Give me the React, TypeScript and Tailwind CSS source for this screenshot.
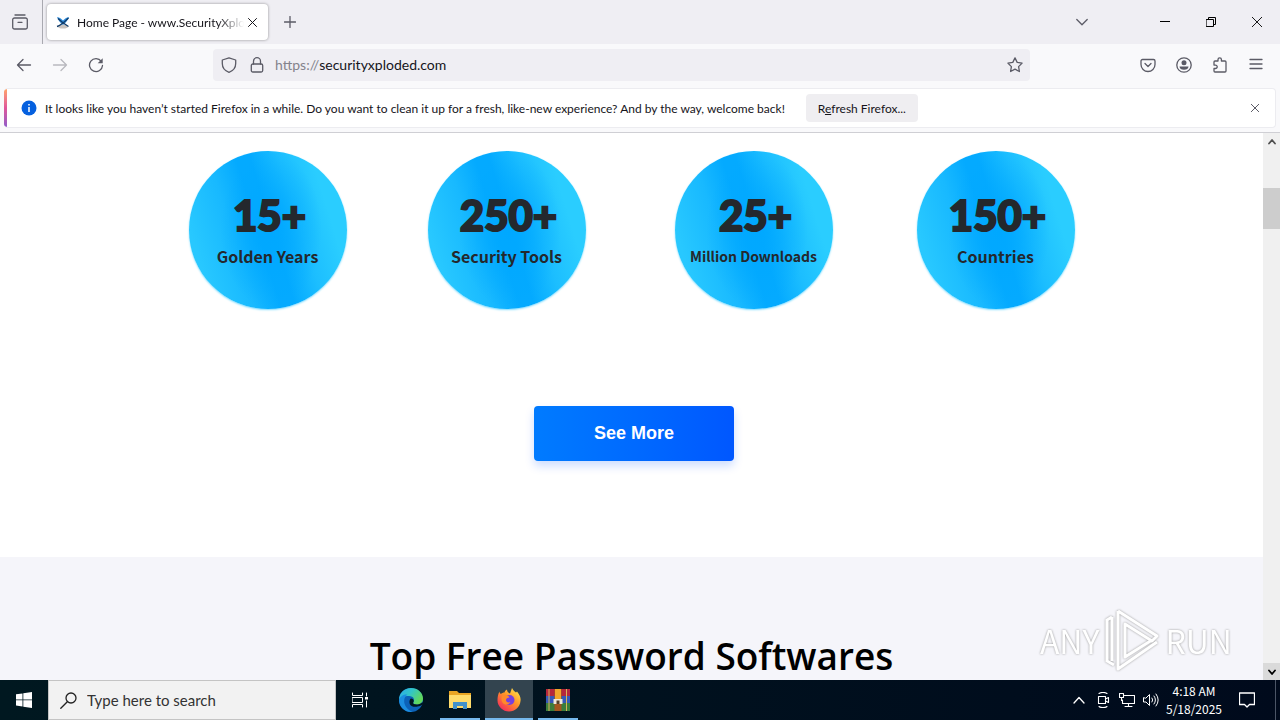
import type { ReactNode } from 'react'
import clsx from 'clsx'

type IconProps = {
  className?: string
  children: ReactNode
  box?: number
}

const Icon = ({ className, children, box = 16 }: IconProps) => (
  <svg
    viewBox={`0 0 ${box} ${box}`}
    className={clsx('shrink-0', className ?? 'h-4 w-4')}
    fill="none"
    stroke="currentColor"
    strokeWidth="1.3"
    strokeLinecap="round"
    strokeLinejoin="round"
    aria-hidden="true"
  >
    {children}
  </svg>
)

const iconButton = 'flex h-8 w-9 items-center justify-center text-[#5b5b66]'

const TabBar = () => (
  <header className="flex h-11 shrink-0 items-center bg-[#efeef3]">
    <button
      aria-label="Firefox View"
      className="flex h-11 w-[43px] items-center justify-center border-r border-[#a9a9b0] pr-[3px] text-[#5b5b66]"
    >
      <Icon className="h-4 w-4">
        <path d="M3 1h10" />
        <path d="M2.500 4h11a1.800 1.800 0 0 1 1.800 1.800v7.400a1.800 1.800 0 0 1-1.800 1.800h-11A1.800 1.800 0 0 1 .7 13.200V5.800A1.800 1.800 0 0 1 2.500 4zM6 8.300h4" />
      </Icon>
    </button>
    <div className="ml-1 flex h-9 w-[221px] items-center rounded bg-white pl-2 shadow-[0_0_3px_rgba(0,0,0,0.4)]">
      <svg viewBox="0 0 16 16" className="h-4 w-4 shrink-0" aria-hidden="true">
        <ellipse cx="8" cy="12.500" rx="5" ry="2" fill="#c9c4c0" />
        <path d="M2 3c3 .5 4 1.500 6 3.500C10 4.500 11 3.500 14 3c-1 3-2.500 5-6 8C4.500 8 3 6 2 3z" fill="#2f8fe0" />
        <path d="M2 12.500c4-1 7-4 11.500-8.500M3 4.500c3 3 6 5.500 10.500 8" stroke="#123c69" strokeWidth="1.300" fill="none" />
      </svg>
      <span className="ml-[6px] w-[167px] overflow-hidden pt-[2px] text-xs whitespace-nowrap text-[#15141a] [mask-image:linear-gradient(to_right,black_84%,transparent)]">
        Home Page - www.SecurityXploded.com
      </span>
      <button aria-label="Close tab" className="flex h-6 w-4 items-center justify-center text-[#15141a]">
        <Icon className="h-[9px] w-[9px]" box={9}>
          <path d="M.5.5l8 8M8.500.5l-8 8" strokeWidth="1" />
        </Icon>
      </button>
    </div>
    <button aria-label="New tab" className="ml-1 flex h-8 w-9 items-center justify-center text-[#5b5b66]">
      <Icon className="h-3 w-3" box={12}>
        <path d="M6 .5v11M.5 6h11" />
      </Icon>
    </button>
    <button aria-label="List all tabs" className="mr-[42px] ml-auto flex h-8 w-9 items-center justify-center text-[#5b5b66]">
      <Icon className="h-3 w-3" box={12}>
        <path d="M.8 3.500L6 8.700l5.200-5.200" />
      </Icon>
    </button>
    <div className="flex text-black">
      <button aria-label="Minimize" className="flex h-11 w-[46px] items-center justify-center">
        <Icon className="h-[10px] w-[10px]" box={10}>
          <path d="M0 4.500h10" strokeWidth="1" />
        </Icon>
      </button>
      <button aria-label="Restore" className="flex h-11 w-[46px] items-center justify-center">
        <Icon className="h-[10px] w-[10px]" box={10}>
          <path d="M.5 2.500h7v7h-7zM2.500 2V.5h7v7H8" strokeWidth="1" />
        </Icon>
      </button>
      <button aria-label="Close" className="flex h-11 w-[46px] items-center justify-center">
        <Icon className="h-[10px] w-[10px]" box={10}>
          <path d="M0 0l10 10M10 0L0 10" strokeWidth="0.900" />
        </Icon>
      </button>
    </div>
  </header>
)

const NavBar = () => (
  <nav className="flex h-11 shrink-0 items-center bg-[#f9f9fb] px-1.5 pb-[2px]">
    <button aria-label="Back" className={iconButton}>
      <Icon>
        <path d="M14.500 8h-13M7 2.500L1.500 8 7 13.500" />
      </Icon>
    </button>
    <button aria-label="Forward" className={clsx(iconButton, 'opacity-40')}>
      <Icon>
        <path d="M1.500 8h13M9 2.500L14.500 8 9 13.500" />
      </Icon>
    </button>
    <button aria-label="Reload" className={iconButton}>
      <Icon>
        <path d="M13.300 4.300A6.500 6.500 0 1 0 14.500 8.500" />
        <path d="M14.700 1.200v5h-5z" fill="currentColor" stroke="none" />
      </Icon>
    </button>
    <div className="ml-[99px] flex h-8 flex-1 items-center rounded-sm bg-[#efeef3] pl-2 text-[#5b5b66]">
      <Icon>
        <path d="M8 .8L1.300 3v3.500c0 4 2.300 7.200 6.700 8.800 4.400-1.600 6.700-4.800 6.700-8.800V3z" />
      </Icon>
      <Icon className="ml-3 h-4 w-4">
        <path d="M4.500 7V4.200a3.500 3.500 0 0 1 7 0V7" />
        <rect x="2.300" y="7" width="11.400" height="8" rx="1.500" />
      </Icon>
      <label htmlFor="address" className="ml-[10px] text-sm text-[#84838c]">
        https://
      </label>
      <input
        id="address"
        defaultValue="securityxploded.com"
        className="min-w-0 flex-1 bg-transparent text-sm text-[#15141a] outline-none"
      />
      <button aria-label="Bookmark this page" className="flex h-8 w-[30px] items-center justify-center">
        <Icon>
          <path d="M8 .9l2.200 4.500 4.900.7-3.500 3.500.8 4.900L8 12.200l-4.400 2.300.8-4.900L.9 6.100l4.900-.7z" />
        </Icon>
      </button>
    </div>
    <div className="ml-[100px] flex">
      <button aria-label="Save to Pocket" className={iconButton}>
        <Icon>
          <path d="M2.500 2.500h11A1.500 1.500 0 0 1 15 4v3.500a7 7 0 0 1-14 0V4a1.500 1.500 0 0 1 1.500-1.500z" />
          <path d="M5 6.500l3 3 3-3" />
        </Icon>
      </button>
      <button aria-label="Account" className={iconButton}>
        <Icon>
          <circle cx="8" cy="8" r="7.200" />
          <circle cx="8" cy="5.800" r="2.500" fill="currentColor" stroke="none" />
          <path d="M3.500 9.500h9c0 2-1.800 3.300-4.500 3.300s-4.500-1.300-4.500-3.300z" fill="currentColor" stroke="none" />
        </Icon>
      </button>
      <button aria-label="Extensions" className={iconButton}>
        <Icon>
          <path d="M6 4V2.500a1.700 1.700 0 0 1 3.400 0V4H13a1 1 0 0 1 1 1v9a1 1 0 0 1-1 1H3a1 1 0 0 1-1-1v-2.500h1.500a1.700 1.700 0 0 0 0-3.400H2V5a1 1 0 0 1 1-1z" />
        </Icon>
      </button>
      <button aria-label="Open application menu" className={iconButton}>
        <Icon>
          <path d="M2 2.500h12M2 7h12M2 11.500h12" />
        </Icon>
      </button>
    </div>
  </nav>
)

const Notification = () => (
  <div className="flex h-[45px] shrink-0 border-b border-[#cfcfd4] bg-[#f9f9fb] px-1 pb-1">
    <div className="flex flex-1 items-center overflow-hidden rounded border border-l-0 border-[#ececf0] bg-white">
      <span className="h-full w-[3px] bg-linear-to-b from-[#ffa266] via-[#e0559a] to-[#9059c8]" />
      <svg viewBox="0 0 16 16" className="ml-[14px] h-4 w-4 shrink-0" aria-hidden="true">
        <circle cx="8" cy="8" r="7.500" fill="#0560df" />
        <path d="M8 7v5M8 4v1.500" stroke="white" strokeWidth="1.500" />
      </svg>
      <p className="ml-2 pt-[2px] text-xs whitespace-nowrap text-[#15141a]">
        It looks like you haven’t started Firefox in a while. Do you want to clean it up for a fresh, like-new
        experience? And by the way, welcome back!
      </p>
      <button className="ml-[21px] h-7 w-28 rounded bg-[#efeef1] pt-[2px] text-xs whitespace-nowrap text-[#15141a]">
        R<u>e</u>fresh Firefox...
      </button>
      <button aria-label="Dismiss" className="mr-1 ml-auto flex h-8 w-8 items-center justify-center text-[#5b5b66]">
        <Icon className="h-2 w-2" box={8}>
          <path d="M.3.3l7.400 7.400M7.700.3L.3 7.700" strokeWidth="1" />
        </Icon>
      </button>
    </div>
  </div>
)

const stats = [
  { value: '15+', label: 'Golden Years', gap: '', size: 'text-base' },
  { value: '250+', label: 'Security Tools', gap: 'ml-[81px]', size: 'text-base' },
  { value: '25+', label: 'Million Downloads', gap: 'ml-[89px]', size: 'text-sm' },
  { value: '150+', label: 'Countries', gap: 'ml-[84px]', size: 'text-base' },
]

const Watermark = () => (
  <div className="absolute right-[31px] bottom-2 flex items-center gap-1 font-['Noto_Sans_CJK_SC',sans-serif] text-[32px] leading-none text-white [filter:drop-shadow(0_0_1px_#999)]">
    <span>ANY</span>
    <svg viewBox="0 0 58 64" className="h-16 w-[58px]" fill="none" stroke="currentColor" strokeWidth="3" aria-hidden="true">
      <path d="M15 3v58l39-27M15 3l39 25-5 5-27-17v33l27-17" strokeLinejoin="round" />
      <path d="M9 9l-5 3v41l7 4M9 9v44" />
    </svg>
    <span>RUN</span>
  </div>
)

const ScrollBar = () => (
  <div className="flex w-[17px] shrink-0 flex-col bg-[#f0f0f0]">
    <button aria-label="Scroll up" className="flex h-[17px] items-center justify-center text-[#505050]">
      <Icon className="h-2 w-2" box={8}>
        <path d="M1 5.500L4 2l3 3.500" strokeWidth="1.800" />
      </Icon>
    </button>
    <div className="flex-1 pt-[38px]">
      <div className="h-[41px] bg-[#cdcdcd]" />
    </div>
    <button aria-label="Scroll down" className="flex h-[17px] items-center justify-center bg-[#dadada] text-black">
      <Icon className="h-2 w-2" box={8}>
        <path d="M1 2.500L4 6l3-3.500" strokeWidth="1.800" />
      </Icon>
    </button>
  </div>
)

const Page = () => (
  <main className="relative flex min-h-0 flex-1 overflow-hidden bg-white">
    <div className="relative flex min-w-0 flex-1 flex-col">
      <section className="shrink-0 pt-[18px] pb-24">
        <div className="flex justify-center">
          {stats.map(({ value, label, gap, size }) => (
            <div
              key={label}
              className={clsx(
                'flex h-[158px] w-[158px] shrink-0 flex-col items-center rounded-full bg-[radial-gradient(ellipse_32%_50%_at_52%_50%,#00a8ff,#00a8ff00),linear-gradient(73deg,#28c8ff_12%,#18b9ff_32%,#04aaff_45%,#04aaff_52%,#1cbeff_66%,#2acdff_82%)] pt-10 text-[#24282d] shadow-[0_1px_2px_#7fdcff]',
                gap,
              )}
            >
              <strong className="pl-1 font-[Lato,sans-serif] text-[42px] leading-[48px] font-black [-webkit-text-stroke:2px_#24282d]">
                {value}
              </strong>
              <span
                className={clsx(
                  "mt-[5px] font-['Noto_Sans_CJK_SC',sans-serif] leading-6 font-bold whitespace-nowrap",
                  size,
                )}
              >
                {label}
              </span>
            </div>
          ))}
        </div>
        <div className="mt-[97px] flex justify-center pl-[5px]">
          <button className="h-[55px] w-[200px] rounded bg-linear-to-r from-[#007bff] to-[#0057ff] pb-[2px] font-['Liberation_Sans',sans-serif] text-lg font-bold text-white shadow-[0_5px_10px_rgba(0,87,255,0.2)]">
            See More
          </button>
        </div>
      </section>
      <section className="flex-1 bg-[#f5f5fa] pt-[70px]">
        <h2 className="text-center font-['Open_Sans',sans-serif] text-[37px] leading-[58px] font-semibold whitespace-nowrap text-black">
          Top Free Password Softwares
        </h2>
      </section>
      <Watermark />
    </div>
    <ScrollBar />
  </main>
)

const taskButton = 'flex h-10 w-12 items-center justify-center'

const TaskBar = () => (
  <footer className="flex h-10 shrink-0 items-center bg-linear-to-r from-[#001820] to-[#000a1c] text-white">
    <button aria-label="Start" className={taskButton}>
      <svg viewBox="0 0 16 16" className="h-4 w-4" fill="white" aria-hidden="true">
        <path d="M0 2.300l6.500-.9v6.100H0zM7.300 1.300L16 0v7.500H7.300zM0 8.300h6.500v6.200L0 13.600zM7.300 8.300H16V16l-8.700-1.300z" />
      </svg>
    </button>
    <label className="flex h-10 w-[288px] items-center border border-[#c4c4c4] bg-[#f2f2f2] pl-[11px] text-[#222]">
      <Icon className="h-[17px] w-[17px]" box={17}>
        <circle cx="11" cy="6" r="5" />
        <path d="M7.300 9.700L.8 16.200" />
      </Icon>
      <input
        aria-label="Search"
        placeholder="Type here to search"
        className="ml-[10px] min-w-0 flex-1 bg-transparent text-[15px] outline-none placeholder:text-[#333]"
      />
    </label>
    <button aria-label="Task View" className={taskButton}>
      <Icon className="h-4 w-4">
        <path d="M.5 1v2.500h10V1M.5 15v-2.500h10V15M.5 5.500h10v5H.5zM14.500 1v3M14.500 9v6" strokeWidth="1" />
        <path d="M13 5h3v2.500h-3z" fill="white" stroke="none" />
      </Icon>
    </button>
    <div className="ml-[3px] flex gap-px">
      <button aria-label="Microsoft Edge" className={taskButton}>
        <svg viewBox="0 0 24 24" className="h-6 w-6" aria-hidden="true">
          <defs>
            <linearGradient id="edge-wave" x1="0" y1="0" x2="1" y2="0.500">
              <stop offset="0" stopColor="#2aa9ec" />
              <stop offset="0.500" stopColor="#32c5c8" />
              <stop offset="1" stopColor="#62d85a" />
            </linearGradient>
          </defs>
          <circle cx="12" cy="12" r="12" fill="#0c62b8" />
          <path d="M0 12C0 5 5 0 12 0s12 5 12 10.500c0 4-3 6-6.500 6-3 0-4-1.200-3-2.500 1.300-2 .5-6-4.500-6C5 8 1 9 0 12z" fill="url(#edge-wave)" />
          <path d="M0 12c1-4 5-6 8.500-5.500C4.500 9 4 15 7.500 19.500c1.500 2 4 3.800 6.500 4.300C6 25 0 19 0 12z" fill="#1b8de0" />
          <path d="M14.500 14c-1 1.500 0 2.500 3 2.500 2 0 4-.6 5.300-1.800 1.400-.8 1.500.2 1.200 1.300-1.500 2.500-11 4.500-13 .5-1-2-.7-5 1-6 2.300.2 3.300 2 2.500 3.500z" fill="#001722" />
        </svg>
      </button>
      <button aria-label="File Explorer" className={clsx(taskButton, 'relative')}>
        <svg viewBox="0 0 22 20" className="h-5 w-[22px]" aria-hidden="true">
          <path d="M0 1h8l2 2h12v15H0z" fill="#e9a523" />
          <path d="M0 5h22v13H0z" fill="#ffdc6b" />
          <path d="M4 19v-7h14v7h-4v-3H8v3z" fill="#4292ca" />
        </svg>
        <span className="absolute inset-x-1 bottom-0 h-[2px] bg-[#76b9ed]" />
      </button>
      <button aria-label="Firefox" className={clsx(taskButton, 'relative bg-[#33444f]')}>
        <svg viewBox="0 0 24 24" className="h-6 w-6" aria-hidden="true">
          <defs>
            <linearGradient id="fox" x1="1" y1="0" x2="0.200" y2="1">
              <stop offset="0.100" stopColor="#ffe14a" />
              <stop offset="0.500" stopColor="#ff9328" />
              <stop offset="1" stopColor="#f5265f" />
            </linearGradient>
          </defs>
          <path d="M2.500 3.500c0 1 .5 2 1.500 2.500 1-1 2-1.500 3.500-1.500C8 2.500 9 2 10 1.500c0 2 1 3 3 4L15 0c1 2 2 3 4 4.500l1-1C23 7 24 10 23.500 13c-.5 6-5.500 10.500-11.500 10.500S.5 18.500.5 12.500c0-3.500.5-6.500 2-9z" fill="url(#fox)" />
          <circle cx="12.500" cy="12" r="5" fill="#7540e0" />
          <path d="M5 7.500c3-1.500 6-.5 7.500 2-2 .2-3.500 1-3.500 2.500 0 2 2 3 4.500 2-1.500 3-6 3.500-8 .5-1.300-2-1.300-4.800-.5-7z" fill="#ff8a2a" />
        </svg>
        <span className="absolute inset-x-0 bottom-0 h-[2px] bg-[#76b9ed]" />
      </button>
      <button aria-label="WinRAR" className={clsx(taskButton, 'relative')}>
        <svg viewBox="0 0 24 24" className="h-6 w-6" aria-hidden="true">
          <path d="M0 1h24v7H0z" fill="#b5273c" />
          <path d="M0 8h24v7H0z" fill="#3558b8" />
          <path d="M0 15h24v8H0z" fill="#3b7d3c" />
          <path d="M3 1v22M20.500 1v22" stroke="#d9b35a" strokeWidth="1" />
          <path d="M8.500 1h7v22h-7z" fill="#a3571f" />
          <path d="M9 1h6v10H9z" fill="#f1a62c" />
          <path d="M7.500 11h9v5h-9z" fill="#eee8d8" />
          <path d="M10.500 12.500h3V16h-3z" fill="#51402a" />
        </svg>
        <span className="absolute inset-x-1 bottom-0 h-[2px] bg-[#76b9ed]" />
      </button>
    </div>
    <div className="ml-auto flex items-center">
      <div className="flex gap-2">
        <button aria-label="Show hidden icons">
          <Icon>
            <path d="M3 11l5-5.500 5 5.500" />
          </Icon>
        </button>
        <button aria-label="Meet Now">
          <Icon>
            <path d="M3.500 4.500h7v7h-7zM10.500 7l3-1.500v5l-3-1.500M4 1.500C6 0 10 0 12 1.500M4 14.500c2 1.500 6 1.500 8 0" strokeWidth="1.100" />
          </Icon>
        </button>
        <button aria-label="Network">
          <Icon>
            <path d="M5.500 3.500h10v8h-12V8M9.500 11.500v3M6 14.500h7M.5 1.500h4v4h-4zM2.500 5.500v3" strokeWidth="1.100" />
          </Icon>
        </button>
        <button aria-label="Volume">
          <Icon>
            <path d="M.5 6v4H3l3.500 3.500v-11L3 6zM9 6q1.500 2 0 4M11 4q3 4 0 8M13 2q4.500 6 0 12" strokeWidth="1" />
          </Icon>
        </button>
      </div>
      <button className="w-[70px] text-center font-['Noto_Sans_CJK_SC',sans-serif] text-xs leading-[18px] whitespace-nowrap">
        4:18 AM
        <br />
        5/18/2025
      </button>
      <button aria-label="Notifications" className="flex h-10 w-9 items-center justify-center">
        <Icon className="h-4 w-4">
          <path d="M.5 1h15v11.500h-5L8 15l-2.500-2.500h-5z" />
        </Icon>
      </button>
      <span className="mr-1 ml-[10px] h-10 border-l border-[#4b5566]" />
    </div>
  </footer>
)

export default function App() {
  return (
    <div className="flex h-screen flex-col overflow-hidden font-[Lato,'Open_Sans',sans-serif]">
      <TabBar />
      <NavBar />
      <Notification />
      <Page />
      <TaskBar />
    </div>
  )
}
